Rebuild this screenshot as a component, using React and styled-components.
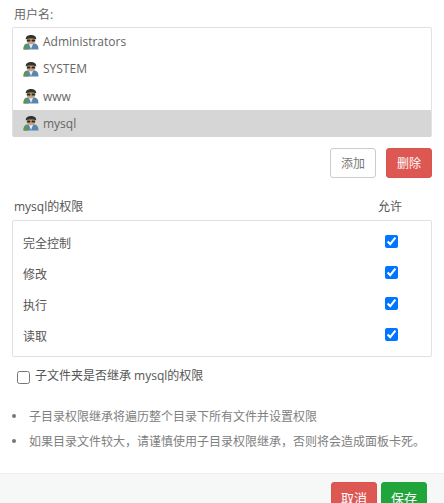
import styled, { createGlobalStyle } from "styled-components";

const GlobalStyle = createGlobalStyle`
  html, body {
    margin: 0;
    padding: 0;
    background: #fff;
    overflow: hidden;
  }
  body {
    font-family: "Open Sans", "Noto Sans CJK SC", sans-serif;
    font-size: 12px;
    color: #555;
  }
`;

const users = ["Administrators", "SYSTEM", "www", "mysql"];
const perms = ["完全控制", "修改", "执行", "读取"];
const tips = [
  "子目录权限继承将遍历整个目录下所有文件并设置权限",
  "如果目录文件较大，请谨慎使用子目录权限继承，否则将会造成面板卡死。",
];

const Page = styled.div`
  width: 444px;
  height: 503px;
  overflow: hidden;
  display: flex;
  flex-direction: column;
`;

const Body = styled.div`
  height: 473px;
  box-sizing: border-box;
  padding: 5px 12px 0;
  flex-shrink: 0;
`;

const FieldLabel = styled.div`
  height: 22px;
  line-height: 18px;
  padding: 1px 0 0 2px;
  box-sizing: border-box;
  color: #666;
`;

const UserList = styled.ul`
  list-style: none;
  margin: 0;
  padding: 0;
  border: 1px solid #e1e1e1;
  border-radius: 2px;
  height: 110px;
  box-sizing: border-box;
`;

const UserRow = styled.li`
  height: 27.25px;
  display: flex;
  align-items: center;
  gap: 4px;
  padding-left: 10px;
  background: ${(p) => (p.$active ? "#d6d6d6" : "transparent")};
  font-size: 12px;
  color: #666;
`;

const Actions = styled.div`
  display: flex;
  justify-content: flex-end;
  gap: 10px;
  margin-top: 11px;
`;

const Button = styled.button`
  width: 46px;
  height: 30px;
  padding: 0;
  border-radius: 3px;
  border: 1px solid ${(p) => (p.$kind === "danger" ? "#d9534f" : p.$kind === "save" ? "#20a53a" : "#ccc")};
  background: ${(p) => (p.$kind === "danger" ? "#dd5753" : p.$kind === "save" ? "#20a53a" : "#fff")};
  color: ${(p) => (p.$kind ? "#fff" : "#777")};
  font: inherit;
  font-size: 12px;
`;

const PermHeader = styled.div`
  display: flex;
  justify-content: space-between;
  margin-top: 19px;
  height: 23px;
  line-height: 18px;
  padding: 1px 30px 0 2px;
  box-sizing: border-box;
  color: #555;
`;

const PermBox = styled.div`
  height: 137px;
  box-sizing: border-box;
  border: 1px solid #e1e1e1;
  border-radius: 2px;
  padding: 5px 0;
`;

const PermRow = styled.label`
  height: 31px;
  display: flex;
  align-items: center;
  justify-content: space-between;
  padding: 0 33px 0 10px;
  color: #555;
`;

const PermName = styled.span`
  position: relative;
  top: 1px;
`;

const Check = styled.input.attrs({ type: "checkbox" })`
  width: 13px;
  height: 13px;
  margin: 0;
  accent-color: #0075ff;
`;

const InheritRow = styled.label`
  display: flex;
  align-items: flex-start;
  gap: 5px;
  margin-top: 10px;
  padding-left: 5px;
  height: 18px;
  line-height: 17px;
  color: #555;
`;

const InheritCheck = styled(Check)`
  flex-shrink: 0;
  margin-top: 4px;
`;

const Tips = styled.ul`
  list-style: none;
  margin: 18px 0 0;
  padding: 0;
`;

const Tip = styled.li`
  display: flex;
  align-items: center;
  height: 25px;
  padding-left: 17px;
  color: #808080;
  font-size: 12px;
  white-space: nowrap;
  position: relative;
  &::before {
    content: "";
    position: absolute;
    left: 0;
    top: 11px;
    width: 4px;
    height: 4px;
    border-radius: 50%;
    background: #777;
  }
`;

const Footer = styled.div`
  flex: 1;
  background: #f6f8f8;
  border-top: 1px solid #eee;
  display: flex;
  justify-content: flex-end;
  gap: 4px;
  padding: 8px 17px 0 0;
`;

const FooterButton = styled(Button)`
  flex-shrink: 0;
  font-size: 13px;
`;

const UserIcon = () => (
  <svg width="16" height="16" viewBox="0 0 16 16">
    <path d="M0.500 15.500c0-3.500 1-5.500 3.500-6h8c2.500.5 3.500 2.500 3.500 6z" fill="#5a86ad" />
    <path d="M0.500 15.500c0-3 .5-4.500 2.500-6l2.500 6z" fill="#5c9648" />
    <path d="M6 10h4l-2 5z" fill="#e6edf2" />
    <ellipse cx="8" cy="6.500" rx="4.500" ry="3.800" fill="#c9a27c" />
    <path d="M2.800 5.500C2.500 2 5.500 1 8 1s5.500 1 5.200 4.500C11.500 4.300 4.500 4.300 2.800 5.500z" fill="#33322e" />
    <rect x="4" y="5.500" width="3.400" height="2" rx=".5" fill="#2b2a27" />
    <rect x="8.600" y="5.500" width="3.400" height="2" rx=".5" fill="#2b2a27" />
  </svg>
);

const App = () => (
  <>
    <GlobalStyle />
    <Page>
      <Body>
        <FieldLabel>用户名:</FieldLabel>
        <UserList>
          {users.map((name) => (
            <UserRow key={name} $active={name === "mysql"}>
              <UserIcon />
              {name}
            </UserRow>
          ))}
        </UserList>
        <Actions>
          <Button>添加</Button>
          <Button $kind="danger">删除</Button>
        </Actions>
        <PermHeader>
          <span>mysql的权限</span>
          <span>允许</span>
        </PermHeader>
        <PermBox>
          {perms.map((perm) => (
            <PermRow key={perm}>
              <PermName>{perm}</PermName>
              <Check defaultChecked />
            </PermRow>
          ))}
        </PermBox>
        <InheritRow>
          <InheritCheck />
          子文件夹是否继承 mysql的权限
        </InheritRow>
        <Tips>
          {tips.map((tip) => (
            <Tip key={tip}>{tip}</Tip>
          ))}
        </Tips>
      </Body>
      <Footer>
        <FooterButton $kind="danger">取消</FooterButton>
        <FooterButton $kind="save">保存</FooterButton>
      </Footer>
    </Page>
  </>
);

export default App;
